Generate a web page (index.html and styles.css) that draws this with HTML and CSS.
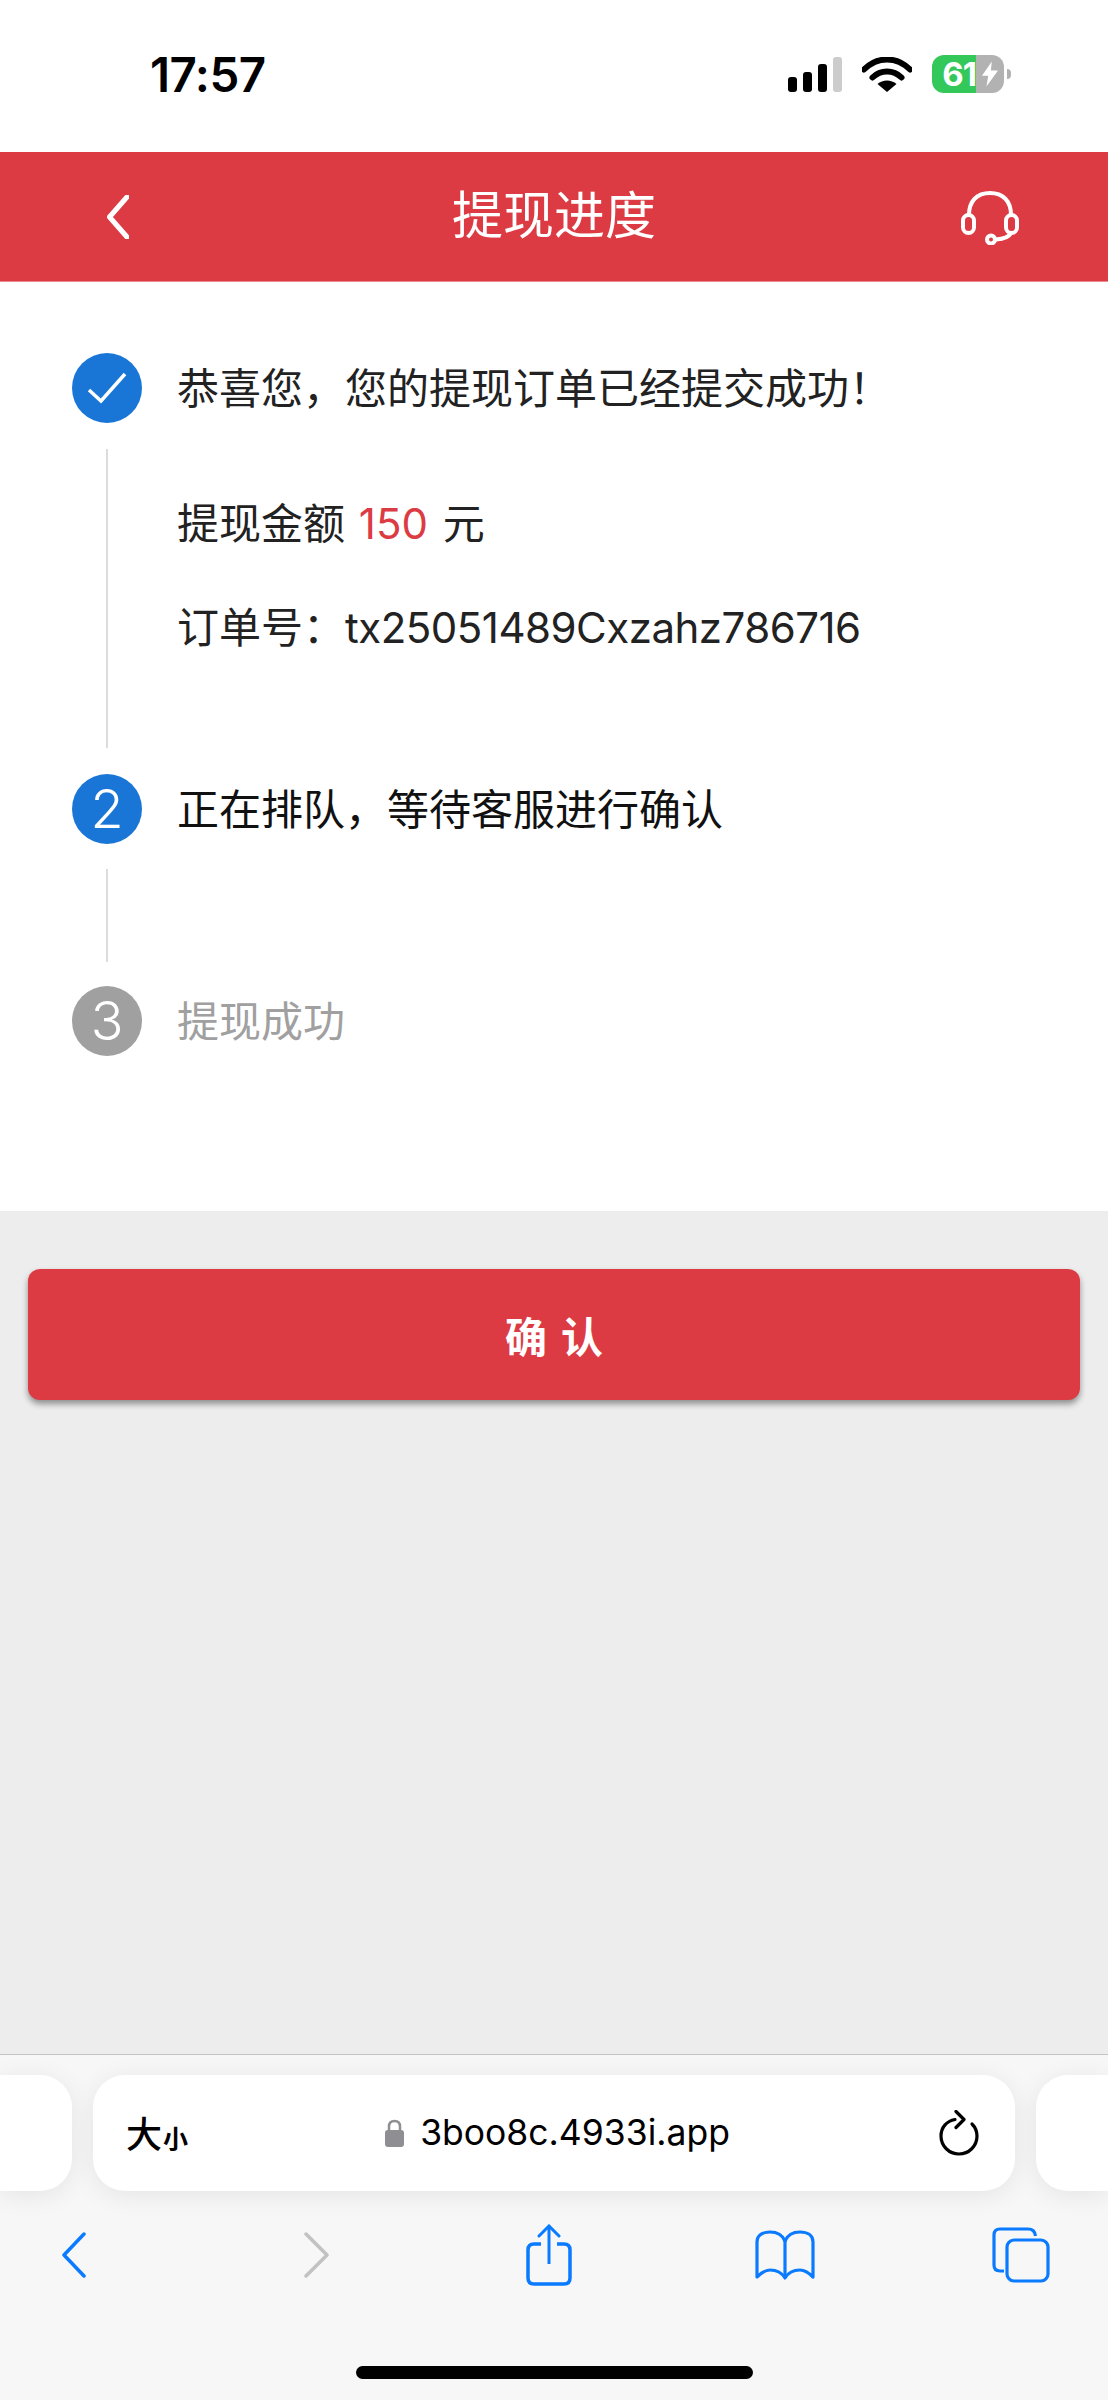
FILE: index.html
```html
<!DOCTYPE html>
<html lang="zh">
    <head>
        <meta charset="utf-8" />
        <title>提现进度</title>
        <link rel="stylesheet" href="styles.css">
    </head>
    <body>
        <div class="status-bar">
            <span class="clock">17:57</span>
            <div class="status-icons">
                <div class="signal">
                    <i class="bar bar-1"></i>
                    <i class="bar bar-2"></i>
                    <i class="bar bar-3"></i>
                    <i class="bar bar-4"></i>
                </div>
                <svg class="wifi" viewBox="0 0 50 35">
                    <path d="M2 12.5C8.5 6 16.5 2.5 25 2.5S41.500 6 48 12.500" fill="none" stroke="#000" stroke-width="6" stroke-linecap="round"/>
                    <path d="M10.500 20.500C14.500 16.500 19.500 14.500 25 14.500S35.500 16.500 39.500 20.500" fill="none" stroke="#000" stroke-width="6" stroke-linecap="round"/>
                    <path d="M25 35L15.500 27C18 24.800 21.500 23.500 25 23.500S32 24.800 34.500 27Z" fill="#000"/>
                </svg>
                <div class="battery">
                    <div class="battery-body">
                        <span class="battery-level">61</span>
                        <div class="battery-rest">
                            <svg class="bolt" viewBox="0 0 18 28"><path d="M11 0L0 16H7L5 28L18 10H10Z" fill="#fff"/></svg>
                        </div>
                    </div>
                    <i class="battery-nub"></i>
                </div>
            </div>
        </div>

        <div class="nav-bar">
            <svg class="nav-back" viewBox="0 0 22 44"><path d="M20 2L2.500 22L20 42" fill="none" stroke="#fff" stroke-width="5" stroke-linecap="round" stroke-linejoin="round"/></svg>
            <span class="nav-title">提现进度</span>
            <svg class="nav-service" viewBox="0 0 58 54" fill="none" stroke="#fff" stroke-width="4">
                <path d="M8 24C8 10 16 2 29 2S50 10 50 24"/>
                <rect x="2" y="24" width="11" height="18" rx="5.500"/>
                <rect x="45" y="24" width="11" height="18" rx="5.500"/>
                <path d="M50 42C48 46 42 48 35 48.500"/>
                <circle cx="30" cy="48.500" r="4"/>
            </svg>
        </div>

        <div class="progress">
            <div class="step">
                <div class="step-dot">
                    <svg class="check" viewBox="0 0 40 32"><path d="M2 18L14 29L38 2" fill="none" stroke="#fff" stroke-width="3.500"/></svg>
                </div>
                <span class="step-text">恭喜您，您的提现订单已经提交成功！</span>
            </div>
            <div class="step-link step-link-long">
                <p class="detail">提现金额 <span class="amount">150</span> 元</p>
                <p class="detail">订单号：<span class="order-no">tx25051489Cxzahz786716</span></p>
            </div>
            <div class="step">
                <div class="step-dot">2</div>
                <span class="step-text step-text-now">正在排队，等待客服进行确认</span>
            </div>
            <div class="step-link step-link-short"></div>
            <div class="step step-todo">
                <div class="step-dot">3</div>
                <span class="step-text">提现成功</span>
            </div>
        </div>

        <div class="page-rest">
            <button class="confirm">确认</button>
        </div>

        <div class="browser-bar">
            <div class="address-row">
                <div class="tab-peek tab-peek-left"></div>
                <div class="address">
                    <div class="text-size"><span class="big">大</span><span class="small">小</span></div>
                    <div class="url">
                        <svg class="lock" viewBox="0 0 19 28">
                            <path d="M4 12V7.500C4 4 6 2 9.500 2S15 4 15 7.500V12" fill="none" stroke="#8e8e93" stroke-width="2.500"/>
                            <rect x="0" y="11" width="19" height="17" rx="3" fill="#8e8e93"/>
                        </svg>
                        <span>3boo8c.4933i.app</span>
                    </div>
                    <svg class="reload" viewBox="0 0 40 46" fill="none" stroke="#000" stroke-width="3.200" stroke-linecap="round" stroke-linejoin="round">
                        <path d="M16 9.500C7.500 11 2 17.500 2 26C2 36 10 44 20 44S38 36 38 26C38 21 36 17 33 14"/>
                        <path d="M17 1.500L25 9.500L17 17.500"/>
                    </svg>
                </div>
                <div class="tab-peek tab-peek-right"></div>
            </div>
            <div class="toolbar">
                <svg class="tool tool-back" viewBox="0 0 24 46"><path d="M22 2L2 23L22 44" fill="none" stroke="#0a7aff" stroke-width="3.500" stroke-linecap="round" stroke-linejoin="round"/></svg>
                <svg class="tool tool-forward" viewBox="0 0 25 46"><path d="M2 2L23 23L2 44" fill="none" stroke="#c2c2c2" stroke-width="3.500" stroke-linecap="round" stroke-linejoin="round"/></svg>
                <svg class="tool tool-share" viewBox="0 0 46 62" fill="none" stroke="#0a7aff" stroke-width="3.500">
                    <path d="M15 20H8C4 20 2 22 2 26V54C2 58 4 60 8 60H38C42 60 44 58 44 54V26C44 22 42 20 38 20H31"/>
                    <path d="M23 40V2" stroke-width="3"/>
                    <path d="M13 12L23 2L33 12" stroke-width="3" stroke-linecap="round"/>
                </svg>
                <svg class="tool tool-book" viewBox="0 0 60 50" fill="none" stroke="#0a7aff" stroke-width="3.200" stroke-linejoin="round">
                    <path d="M30 11C27 4 21 2 15 2C8 2 2 5 2 12V47C7 42 11 40 15 40C22 40 27 43 30 48C33 43 38 40 45 40C49 40 53 42 58 47V12C58 5 52 2 45 2C39 2 33 4 30 11Z"/>
                    <path d="M30 11V48"/>
                </svg>
                <svg class="tool tool-tabs" viewBox="0 0 58 56" fill="none" stroke="#0a7aff" stroke-width="3.200">
                    <path d="M12 44H8C4 44 2 42 2 38V8C2 4 4 2 8 2H36C40 2 43 4 43.500 9"/>
                    <rect x="15" y="13" width="41" height="41" rx="7"/>
                </svg>
            </div>
            <div class="home-indicator"></div>
        </div>
    </body>
</html>
```

FILE: styles.css
```css
html, body {
    margin: 0;
    padding: 0;
}
body {
    width: 1108px;
    height: 2400px;
    display: flex;
    flex-direction: column;
    overflow: hidden;
    background: #ededed;
    font-family: "Inter", "Noto Sans CJK SC", sans-serif;
}
svg {
    display: block;
    flex: none;
}

/* status bar */
.status-bar {
    height: 152px;
    flex: none;
    background: #fff;
    display: flex;
    justify-content: space-between;
    align-items: flex-start;
    padding: 0 97px 0 150px;
    box-sizing: border-box;
}
.clock {
    margin-top: 46px;
    font-size: 47.5px;
    line-height: 58px;
    font-weight: 600;
    color: #000;
    letter-spacing: -0.5px;
}
.status-icons {
    display: flex;
    align-items: flex-start;
    margin-top: 55px;
}
.signal {
    display: flex;
    align-items: flex-end;
    gap: 6px;
    height: 35px;
    margin-top: 2px;
}
.bar {
    display: block;
    width: 9px;
    background: #000;
    border-radius: 3px;
}
.bar-1 { height: 15px; }
.bar-2 { height: 20px; }
.bar-3 { height: 28px; }
.bar-4 { height: 35px; background: #ccc; }
.wifi {
    width: 50px;
    height: 35px;
    margin: 2px 20px 0 20px;
}
.battery {
    display: flex;
    align-items: center;
}
.battery-body {
    width: 72px;
    height: 38px;
    border-radius: 12px;
    overflow: hidden;
    display: flex;
}
.battery-level {
    width: 44px;
    background: #34c759;
    color: #fff;
    font-size: 33px;
    line-height: 38px;
    font-weight: 700;
    text-align: right;
    letter-spacing: -1px;
}
.battery-rest {
    flex: 1;
    background: #b2b2b2;
    display: flex;
    align-items: center;
    justify-content: center;
}
.bolt {
    width: 16px;
    height: 26px;
}
.battery-nub {
    display: block;
    width: 4px;
    height: 10px;
    margin-left: 3px;
    background: #b2b2b2;
    border-radius: 0 4px 4px 0;
}

/* red title bar */
.nav-bar {
    height: 130px;
    flex: none;
    background: #dc3b43;
    border-bottom: 1px solid #ea8a8f;
    box-sizing: border-box;
    display: flex;
    align-items: center;
    justify-content: space-between;
    padding: 0 89px 0 107px;
}
.nav-back {
    width: 22px;
    height: 44px;
}
.nav-title {
    font-size: 51px;
    line-height: 60px;
    color: #fff;
    margin-left: 18px;
    margin-top: -2px;
}
.nav-service {
    width: 58px;
    height: 54px;
    margin-top: 2px;
}

/* steps */
.progress {
    flex: none;
    height: 929px;
    box-sizing: border-box;
    background: #fff;
    padding: 71px 0 0 72px;
    display: flex;
    flex-direction: column;
}
.step {
    display: flex;
    align-items: center;
    height: 70px;
    flex: none;
}
.step-dot {
    width: 70px;
    height: 70px;
    flex: none;
    border-radius: 50%;
    background: #1a76d6;
    color: #fff;
    font-size: 54px;
    line-height: 70px;
    text-align: center;
    font-weight: 300;
    display: flex;
    align-items: center;
    justify-content: center;
}
.step-todo .step-dot {
    background: #a0a0a0;
}
.step-text {
    margin-left: 35px;
    padding-top: 2px;
    font-size: 42px;
    line-height: 60px;
    color: #222;
    white-space: nowrap;
}
.step-text-now {
    color: #111;
}
.step-todo .step-text {
    color: #a0a0a0;
}
.check {
    width: 40px;
    height: 32px;
}
.step-link {
    margin: 26px 0 26px 34px;
    border-left: 2px solid #dcdcdc;
    padding-left: 69px;
    box-sizing: border-box;
    flex: none;
}
.step-link-long {
    height: 299px;
    padding-top: 45px;
}
.step-link-short {
    height: 93px;
    margin-top: 25px;
    margin-bottom: 24px;
}
.detail {
    margin: 0 0 44px;
    font-size: 42px;
    line-height: 60px;
    color: #222;
    white-space: nowrap;
}
.amount {
    color: #dc3b43;
    margin: 0 3px 0 2px;
}
.order-no {
    letter-spacing: -0.5px;
}

/* confirm button */
.page-rest {
    flex: 1;
    padding: 58px 28px 0;
}
.confirm {
    display: block;
    width: 100%;
    height: 131px;
    border: 0;
    border-radius: 12px;
    background: #dc3b43;
    box-shadow: 0 4px 6px rgba(0, 0, 0, .4);
    color: #fff;
    font-family: inherit;
    font-size: 42px;
    font-weight: 600;
    letter-spacing: 14px;
    padding: 0 0 0 14px;
}

/* safari bottom bar */
.browser-bar {
    height: 346px;
    flex: none;
    box-sizing: border-box;
    background: #f7f7f7;
    border-top: 1px solid #c4c4c4;
    padding-top: 20px;
    overflow: hidden;
}
.address-row {
    display: flex;
    gap: 21px;
    height: 116px;
}
.tab-peek {
    background: #fff;
    box-shadow: 0 4px 26px rgba(0, 0, 0, .08);
}
.tab-peek-left {
    width: 72px;
    flex: none;
    border-radius: 0 32px 32px 0;
}
.tab-peek-right {
    flex: 1;
    border-radius: 32px 0 0 32px;
}
.address {
    width: 922px;
    flex: none;
    box-sizing: border-box;
    background: #fff;
    border-radius: 32px;
    box-shadow: 0 4px 26px rgba(0, 0, 0, .08);
    padding: 0 36px 0 33px;
    display: grid;
    grid-template-columns: 1fr auto 1fr;
    align-items: center;
}
.text-size {
    display: flex;
    align-items: flex-end;
    font-weight: 500;
    color: #000;
    padding-top: 3px;
}
.big {
    font-size: 36px;
    line-height: 44px;
}
.small {
    font-size: 25px;
    line-height: 36px;
    margin-left: 1px;
    font-weight: 700;
}
.url {
    display: flex;
    align-items: center;
    gap: 16px;
    margin-left: 10px;
    font-size: 35.5px;
    line-height: 44px;
    color: #000;
}
.lock {
    width: 19px;
    height: 28px;
}
.reload {
    width: 40px;
    height: 46px;
    justify-self: end;
}
.toolbar {
    display: flex;
    align-items: center;
    height: 128px;
    padding-left: 62px;
}
.tool-back { width: 24px; height: 46px; }
.tool-forward { width: 25px; height: 46px; margin-left: 218px; }
.tool-share { width: 46px; height: 62px; margin-left: 197px; }
.tool-book { width: 60px; height: 50px; margin-left: 183px; }
.tool-tabs { width: 58px; height: 56px; margin-left: 177px; }
.home-indicator {
    width: 397px;
    height: 13px;
    margin: 47px auto 0;
    border-radius: 7px;
    background: #000;
}
```
